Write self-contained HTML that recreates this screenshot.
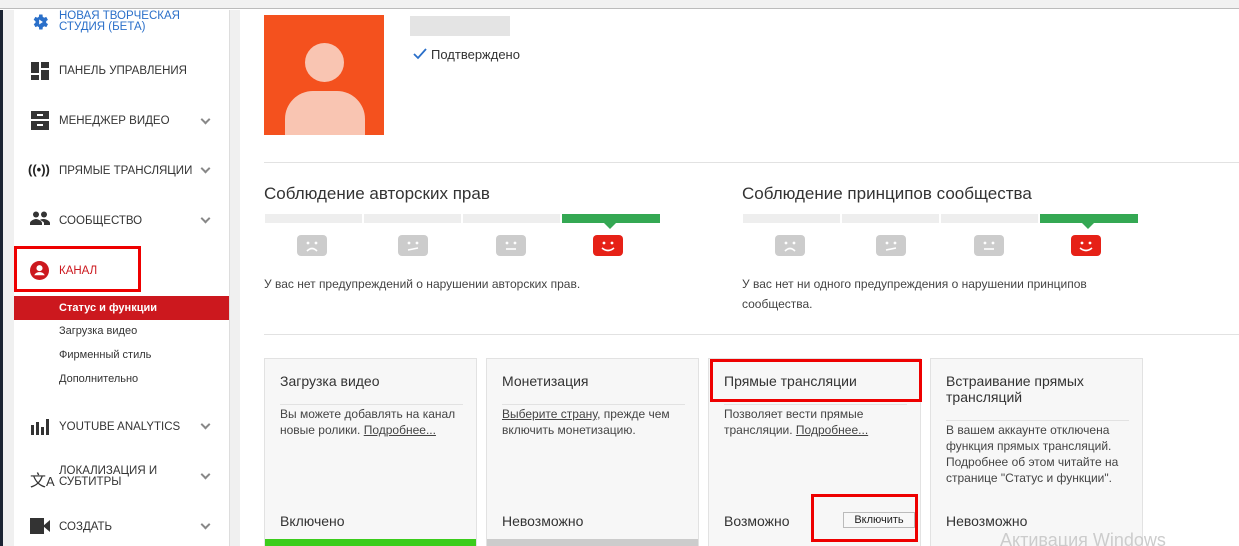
<!DOCTYPE html>
<html style="width:1239px;height:546px;overflow:hidden"><head><meta charset="utf-8"><style>
*{margin:0;padding:0;box-sizing:border-box}
body{width:1239px;height:546px;overflow:hidden;background:#fff;font-family:"Liberation Sans",sans-serif;position:relative;color:#333}
.abs{position:absolute}
.nav{position:absolute;left:59px;font-size:11.5px;color:#333;text-transform:uppercase;line-height:11px}
.chev{position:absolute;left:202px;width:7px;height:7px;border-right:2px solid #888;border-bottom:2px solid #888;transform:rotate(45deg)}
.sub{position:absolute;left:59px;font-size:11px;color:#333}
.h2{position:absolute;font-size:17px;color:#333}
.bar{position:absolute;height:9px;background:#eee;width:97px}
.face{position:absolute;width:30px;height:21px;border-radius:4px;background:#ccc}
.face svg{position:absolute;left:0;top:0}
.p{position:absolute;font-size:12px;color:#444;line-height:20px}
.card{position:absolute;top:358px;width:213px;height:188px;background:#f7f7f7;border:1px solid #e2e2e2;border-bottom:none}
.card .t{position:absolute;left:15px;top:14px;font-size:14px;color:#333;line-height:16px;width:183px}
.card .ln{position:absolute;left:15px;width:183px;height:1px;background:#e2e2e2}
.card .d{position:absolute;left:15px;font-size:12px;color:#444;line-height:16px;width:190px}
.card .s{position:absolute;left:15px;top:154px;font-size:14px;color:#333}
u{text-decoration:underline}
.red{position:absolute;border:3px solid #e00}
</style></head><body>
<div class="abs" style="left:0;top:0;width:1239px;height:9px;background:#f1f1f1;border-bottom:1px solid #bbb"></div>
<div class="abs" style="left:0;top:10px;width:3px;height:536px;background:#1b2433"></div>
<div class="abs" style="left:3px;top:10px;width:11px;height:536px;background:#f0f0f0"></div>
<div class="abs" style="left:229px;top:10px;width:11px;height:536px;background:#f0f0f0;border-left:1px solid #ddd"></div>

<svg class="abs" style="left:30px;top:12px" width="20" height="20" viewBox="0 0 24 24"><path fill="#2a6fc9" d="M19.4 13a7.5 7.5 0 000-2l2.1-1.6-2-3.5-2.5 1a7 7 0 00-1.7-1L15 3h-4l-.4 2.9a7 7 0 00-1.7 1l-2.5-1-2 3.5L6.6 11a7.5 7.5 0 000 2l-2.1 1.6 2 3.5 2.5-1a7 7 0 001.7 1L11 21h4l.4-2.9a7 7 0 001.7-1l2.5 1 2-3.5z"/><path fill="#fff" d="M11 9v6l4.5-3z"/></svg>
<div class="nav" style="top:11px;color:#2a6fc9">Новая творческая<br>студия (бета)</div>

<svg class="abs" style="left:31px;top:62px" width="18" height="18"><rect x="0" y="0" width="8" height="11" fill="#333"/><rect x="10" y="0" width="8" height="6" fill="#333"/><rect x="10" y="8" width="8" height="10" fill="#333"/><rect x="0" y="13" width="8" height="5" fill="#333"/></svg>
<div class="nav" style="top:66px">Панель управления</div>

<svg class="abs" style="left:31px;top:111px" width="18" height="19"><rect x="0" y="0" width="18" height="8" fill="#333"/><rect x="0" y="10" width="18" height="9" fill="#333"/><rect x="6" y="3" width="6" height="2" fill="#fff"/><rect x="6" y="13" width="6" height="2" fill="#fff"/></svg>
<div class="nav" style="top:116px">Менеджер видео</div><div class="chev" style="top:116px"></div>

<div class="abs" style="left:28px;top:162px;font-size:13px;font-weight:bold;color:#222">((•))</div>
<div class="nav" style="top:166px">Прямые трансляции</div><div class="chev" style="top:165px"></div>

<svg class="abs" style="left:30px;top:211px" width="20" height="14" viewBox="0 0 20 14"><circle cx="6" cy="3.5" r="3" fill="#333"/><circle cx="14" cy="3.5" r="3" fill="#333"/><path d="M0 14v-2c0-2 4-4 6-4s6 2 6 4v2zM10 9c1-1 3-1 4-1 2 0 6 2 6 4v2h-6v-2c0-1-2-2-4-3z" fill="#333"/></svg>
<div class="nav" style="top:216px">Сообщество</div><div class="chev" style="top:215px"></div>

<svg class="abs" style="left:30px;top:261px" width="19" height="19" viewBox="0 0 20 20"><circle cx="10" cy="10" r="10" fill="#cc181e"/><circle cx="10" cy="7.5" r="3.2" fill="#fff"/><path d="M4.5 15c1-2.5 3.5-3.3 5.5-3.3s4.5.8 5.5 3.3" fill="#fff"/></svg>
<div class="nav" style="top:266px;color:#cc181e">Канал</div>
<div class="red" style="left:14px;top:246px;width:127px;height:46px"></div>

<div class="abs" style="left:14px;top:296px;width:215px;height:24px;background:#cc181e"></div>
<div class="sub" style="top:302px;color:#fff;font-weight:bold">Статус и функции</div>
<div class="sub" style="top:325px">Загрузка видео</div>
<div class="sub" style="top:349px">Фирменный стиль</div>
<div class="sub" style="top:373px">Дополнительно</div>

<svg class="abs" style="left:31px;top:419px" width="18" height="16"><rect x="0" y="6" width="3" height="10" fill="#333"/><rect x="5" y="3" width="3" height="13" fill="#333"/><rect x="10" y="8" width="3" height="8" fill="#333"/><rect x="15" y="0" width="3" height="16" fill="#333"/></svg>
<div class="nav" style="top:422px">YouTube Analytics</div><div class="chev" style="top:421px"></div>

<div class="abs" style="left:30px;top:467px;font-size:16px;color:#333">文<span style="font-size:13px">A</span></div>
<div class="nav" style="top:466px">Локализация и<br>субтитры</div><div class="chev" style="top:471px"></div>

<svg class="abs" style="left:30px;top:518px" width="20" height="16"><rect x="0" y="0" width="14" height="16" fill="#333"/><path d="M13 8l7-6v12z" fill="#333"/></svg>
<div class="nav" style="top:522px">Создать</div><div class="chev" style="top:521px"></div>

<div class="abs" style="left:264px;top:15px;width:120px;height:120px;background:#f4511e;overflow:hidden">
<div class="abs" style="left:41px;top:28px;width:39px;height:39px;border-radius:50%;background:#f9c5b2"></div>
<div class="abs" style="left:21px;top:76px;width:80px;height:60px;border-radius:28px 28px 0 0;background:#f9c5b2"></div>
</div>
<div class="abs" style="left:410px;top:16px;width:100px;height:20px;background:#e4e4e4"></div>
<svg class="abs" style="left:413px;top:48px" width="14" height="12"><path d="M1 6l4 4 8-9" stroke="#2a6fc9" stroke-width="1.8" fill="none"/></svg>
<div class="abs" style="left:431px;top:47px;font-size:13px;color:#333">Подтверждено</div>

<div class="abs" style="left:264px;top:162px;width:975px;height:1px;background:#e2e2e2"></div>

<div class="h2" style="left:264px;top:184px">Соблюдение авторских прав</div>
<div class="h2" style="left:742px;top:184px">Соблюдение принципов сообщества</div>

<div class="bar" style="left:265px;top:214px"></div><div class="bar" style="left:364px;top:214px"></div><div class="bar" style="left:463px;top:214px"></div><div class="bar" style="left:562px;top:214px;background:#34a853;width:98px"></div>
<div class="abs" style="left:604px;top:223px;border:6px solid transparent;border-top-color:#34a853"></div>
<div class="face" style="left:297px;top:235px"><svg width="30" height="21"><circle cx="11" cy="8" r="1.4" fill="#fff"/><circle cx="19" cy="8" r="1.4" fill="#fff"/><path d="M10 16q5-5 10 0" stroke="#fff" stroke-width="1.6" fill="none"/></svg></div>
<div class="face" style="left:398px;top:235px"><svg width="30" height="21"><circle cx="11" cy="8" r="1.4" fill="#fff"/><circle cx="19" cy="8" r="1.4" fill="#fff"/><path d="M10 15l10-2" stroke="#fff" stroke-width="1.6"/></svg></div>
<div class="face" style="left:496px;top:235px"><svg width="30" height="21"><circle cx="11" cy="8" r="1.4" fill="#fff"/><circle cx="19" cy="8" r="1.4" fill="#fff"/><path d="M10 14h10" stroke="#fff" stroke-width="1.6"/></svg></div>
<div class="face" style="left:593px;top:235px;background:#e62117"><svg width="30" height="21"><circle cx="11" cy="8" r="1.4" fill="#fff"/><circle cx="19" cy="8" r="1.4" fill="#fff"/><path d="M9 13q6 5 12 0" stroke="#fff" stroke-width="1.6" fill="none"/></svg></div>

<div class="bar" style="left:743px;top:214px"></div><div class="bar" style="left:842px;top:214px"></div><div class="bar" style="left:941px;top:214px"></div><div class="bar" style="left:1040px;top:214px;background:#34a853;width:98px"></div>
<div class="abs" style="left:1082px;top:223px;border:6px solid transparent;border-top-color:#34a853"></div>
<div class="face" style="left:775px;top:235px"><svg width="30" height="21"><circle cx="11" cy="8" r="1.4" fill="#fff"/><circle cx="19" cy="8" r="1.4" fill="#fff"/><path d="M10 16q5-5 10 0" stroke="#fff" stroke-width="1.6" fill="none"/></svg></div>
<div class="face" style="left:876px;top:235px"><svg width="30" height="21"><circle cx="11" cy="8" r="1.4" fill="#fff"/><circle cx="19" cy="8" r="1.4" fill="#fff"/><path d="M10 15l10-2" stroke="#fff" stroke-width="1.6"/></svg></div>
<div class="face" style="left:974px;top:235px"><svg width="30" height="21"><circle cx="11" cy="8" r="1.4" fill="#fff"/><circle cx="19" cy="8" r="1.4" fill="#fff"/><path d="M10 14h10" stroke="#fff" stroke-width="1.6"/></svg></div>
<div class="face" style="left:1071px;top:235px;background:#e62117"><svg width="30" height="21"><circle cx="11" cy="8" r="1.4" fill="#fff"/><circle cx="19" cy="8" r="1.4" fill="#fff"/><path d="M9 13q6 5 12 0" stroke="#fff" stroke-width="1.6" fill="none"/></svg></div>

<div class="p" style="left:264px;top:274px">У вас нет предупреждений о нарушении авторских прав.</div>
<div class="p" style="left:742px;top:274px;width:400px">У вас нет ни одного предупреждения о нарушении принципов<br>сообщества.</div>

<div class="abs" style="left:264px;top:334px;width:975px;height:1px;background:#e2e2e2"></div>

<div class="card" style="left:264px"><div class="t">Загрузка видео</div><div class="ln" style="top:45px"></div>
<div class="d" style="top:47px">Вы можете добавлять на канал<br>новые ролики. <u>Подробнее...</u></div>
<div class="s">Включено</div><div class="abs" style="left:0;top:180px;width:211px;height:8px;background:#3ccc1c"></div></div>
<div class="card" style="left:486px"><div class="t">Монетизация</div><div class="ln" style="top:45px"></div>
<div class="d" style="top:47px"><u>Выберите страну</u>, прежде чем<br>включить монетизацию.</div>
<div class="s">Невозможно</div><div class="abs" style="left:0;top:180px;width:211px;height:8px;background:#ccc"></div></div>
<div class="card" style="left:708px"><div class="t">Прямые трансляции</div><div class="ln" style="top:45px"></div>
<div class="d" style="top:47px">Позволяет вести прямые<br>трансляции. <u>Подробнее...</u></div>
<div class="s">Возможно</div>
<div class="abs" style="left:134px;top:153px;width:72px;height:16px;border:1px solid #bbb;background:#f8f8f8;font-size:11px;color:#222;text-align:center;line-height:14px">Включить</div></div>
<div class="card" style="left:930px"><div class="t">Встраивание прямых трансляций</div><div class="ln" style="top:61px"></div>
<div class="d" style="top:63px">В вашем аккаунте отключена<br>функция прямых трансляций.<br>Подробнее об этом читайте на<br>странице "Статус и функции".</div>
<div class="s">Невозможно</div></div>

<div class="red" style="left:710px;top:359px;width:212px;height:43px"></div>
<div class="red" style="left:811px;top:494px;width:107px;height:48px"></div>
<div class="abs" style="left:1000px;top:530px;font-size:18px;color:#ccc">Активация Windows</div>
</body></html>
